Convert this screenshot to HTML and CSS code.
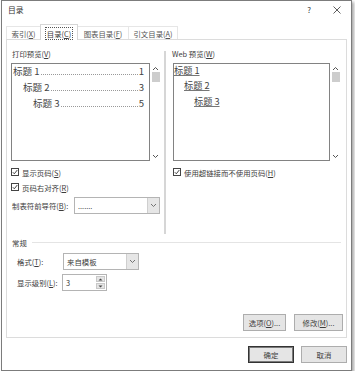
FILE: index.html
```html
<!DOCTYPE html>
<html lang="zh-CN">
<head>
    <meta charset="UTF-8">
    <meta name="viewport" content="width=device-width, initial-scale=1.0">
    <title>目录</title>
    <link rel="stylesheet" href="styles.css">
</head>
<body>
    <div class="dialog">
        <div class="titlebar">
            <span class="title">目录</span>
            <span class="help">?</span>
            <span class="close">
                <svg width="8" height="8" viewBox="0 0 8 8"><path d="M0.5 0.5 L7.5 7.5 M7.5 0.5 L0.5 7.5" stroke="#333" stroke-width="0.8" fill="none"/></svg>
            </span>
        </div>

        <div class="tabs">
            <span class="tab tab-index"><span>索引(<u>X</u>)</span></span>
            <span class="tab tab-toc active"><span class="focus">目录(<u>C</u>)</span></span>
            <span class="tab tab-figures"><span>图表目录(<u>F</u>)</span></span>
            <span class="tab tab-cites"><span>引文目录(<u>A</u>)</span></span>
        </div>

        <div class="panel">
            <div class="previews">
                <div class="col col-print">
                    <div class="label">打印预览(<u>V</u>)</div>
                    <div class="preview-wrap">
                        <div class="preview">
                            <div class="entries">
                                <div class="entry"><span>标题 1</span><span class="dots"></span><span>1</span></div>
                                <div class="entry level2"><span>标题 2</span><span class="dots"></span><span>3</span></div>
                                <div class="entry level3"><span>标题 3</span><span class="dots"></span><span>5</span></div>
                            </div>
                        </div>
                        <div class="scrollbar">
                            <svg class="arrow-up" width="7" height="5" viewBox="0 0 7 5"><polyline points="1,4 3.5,1.5 6,4" stroke="#555" stroke-width="1" fill="none"/></svg>
                            <span class="thumb"></span>
                            <svg class="arrow-down" width="7" height="5" viewBox="0 0 7 5"><polyline points="1,1 3.5,3.5 6,1" stroke="#555" stroke-width="1" fill="none"/></svg>
                        </div>
                    </div>
                    <div class="check first">
                        <span class="box"><svg width="6" height="6" viewBox="0 0 6 6"><polyline points="0.8,3.2 2.3,4.8 5.3,1" stroke="#333" stroke-width="0.9" fill="none"/></svg></span>
                        <span>显示页码(<u>S</u>)</span>
                    </div>
                    <div class="check">
                        <span class="box"><svg width="6" height="6" viewBox="0 0 6 6"><polyline points="0.8,3.2 2.3,4.8 5.3,1" stroke="#333" stroke-width="0.9" fill="none"/></svg></span>
                        <span>页码右对齐(<u>R</u>)</span>
                    </div>
                    <div class="leader-row">
                        <span class="leader-label">制表符前导符(<u>B</u>):</span>
                        <div class="select leader-select">
                            <span class="value">.......</span>
                            <span class="select-arrow"><svg width="7" height="5" viewBox="0 0 7 5"><polyline points="1,1 3.5,3.5 6,1" stroke="#666" stroke-width="0.9" fill="none"/></svg></span>
                        </div>
                    </div>
                </div>

                <div class="divider"></div>

                <div class="col col-web">
                    <div class="label">Web 预览(<u>W</u>)</div>
                    <div class="preview-wrap">
                        <div class="preview web">
                            <div class="web-entries">
                                <div class="link">标题 1</div>
                                <div class="link level2">标题 2</div>
                                <div class="link level3">标题 3</div>
                            </div>
                        </div>
                        <div class="scrollbar">
                            <svg class="arrow-up" width="7" height="5" viewBox="0 0 7 5"><polyline points="1,4 3.5,1.5 6,4" stroke="#555" stroke-width="1" fill="none"/></svg>
                            <span class="thumb"></span>
                            <svg class="arrow-down" width="7" height="5" viewBox="0 0 7 5"><polyline points="1,1 3.5,3.5 6,1" stroke="#555" stroke-width="1" fill="none"/></svg>
                        </div>
                    </div>
                    <div class="check first web-check">
                        <span class="box"><svg width="6" height="6" viewBox="0 0 6 6"><polyline points="0.8,3.2 2.3,4.8 5.3,1" stroke="#333" stroke-width="0.9" fill="none"/></svg></span>
                        <span>使用超链接而不使用页码(<u>H</u>)</span>
                    </div>
                </div>
            </div>

            <div class="section">
                <span>常规</span>
                <span class="section-line"></span>
            </div>

            <div class="field field-format">
                <span class="field-label">格式(<u>T</u>):</span>
                <div class="select format-select">
                    <span class="value">来自模板</span>
                    <span class="select-arrow"><svg width="7" height="5" viewBox="0 0 7 5"><polyline points="1,1 3.5,3.5 6,1" stroke="#666" stroke-width="0.9" fill="none"/></svg></span>
                </div>
            </div>
            <div class="field field-levels">
                <span class="field-label">显示级别(<u>L</u>):</span>
                <div class="spin">
                    <span class="value">3</span>
                    <span class="spin-buttons">
                        <span class="spin-btn"><svg width="5" height="3" viewBox="0 0 5 3"><polygon points="0.5,2.6 2.5,0.4 4.5,2.6" fill="#444"/></svg></span>
                        <span class="spin-btn"><svg width="5" height="3" viewBox="0 0 5 3"><polygon points="0.5,0.4 2.5,2.6 4.5,0.4" fill="#444"/></svg></span>
                    </span>
                </div>
            </div>

            <div class="panel-buttons">
                <button class="btn btn-options">选项(<u>O</u>)...</button>
                <button class="btn btn-modify">修改(<u>M</u>)...</button>
            </div>
        </div>

        <div class="footer">
            <button class="btn btn-ok">确定</button>
            <button class="btn btn-cancel">取消</button>
        </div>
    </div>
</body>
</html>
```

FILE: styles.css
```css
* {
    box-sizing: border-box;
}

body {
    margin: 0;
    background: #fff;
    font-family: "Noto Sans CJK SC", "Liberation Sans", sans-serif;
    font-size: 7.4px;
    color: #3c3c3c;
}

u {
    text-decoration: underline;
    text-underline-offset: 1px;
}

.dialog {
    width: 351px;
    height: 371px;
    margin-left: 1px;
    border: 1px solid #7c7c7c;
    box-shadow: 2px 2px 3px rgba(0,0,0,0.35);
    background: #fff;
    display: flex;
    flex-direction: column;
}

/* title bar */
.titlebar {
    height: 23px;
    display: flex;
    align-items: flex-start;
    padding: 3px 0 0 6px;
    line-height: 12px;
    font-size: 7.8px;
    color: #333;
}

.titlebar .title {
    flex: 1;
}

.help {
    width: 8px;
    margin-right: 19px;
    text-align: center;
}

.close {
    width: 10px;
    height: 12px;
    margin-right: 9px;
    display: flex;
    align-items: center;
    justify-content: center;
}

/* tabs */
.tabs {
    height: 15px;
    display: flex;
    align-items: flex-end;
    padding-left: 4px;
}

.tab {
    height: 13px;
    border: 1px solid #e6e6e6;
    border-bottom: none;
    display: flex;
    align-items: center;
    justify-content: center;
    line-height: 11px;
    color: #555;
    margin-left: -1px;
}

.tab:first-child {
    margin-left: 0;
}

.tab-index { width: 35px; }
.tab-toc { width: 38px; }
.tab-figures { width: 52px; }
.tab-cites { width: 50px; }

.tab.active {
    height: 16px;
    margin-bottom: -1px;
    padding-top: 1px;
    border-color: #d6d6d6;
    background: #fff;
    color: #3c3c3c;
    position: relative;
    z-index: 1;
}

.focus {
    outline: 1px dotted #555;
    outline-offset: 0;
    padding: 0 1px;
}

/* tab panel */
.panel {
    margin: 0 4px;
    height: 299px;
    border: 1px solid #dcdcdc;
    display: flex;
    flex-direction: column;
    padding: 0 3px 6px 4px;
}

.previews {
    height: 194px;
    display: flex;
    padding-top: 8px;
}

.col-print {
    width: 150px;
}

.divider {
    width: 2px;
    margin: 3px 0 0 3px;
    background: #d6d6d6;
}

.col-web {
    width: 169px;
    margin-left: 6px;
}

.label {
    height: 12px;
    line-height: 12px;
    margin-bottom: 3px;
    padding-left: 1px;
}

.col-web .label {
    padding-left: 0;
}

.preview-wrap {
    height: 98px;
    display: flex;
}

.col-web .preview-wrap {
    margin-left: 1px;
}

.preview {
    flex: 1;
    border: 1px solid #828282;
    padding: 0 5px 0 1px;
    overflow: hidden;
}

.preview.web {
    padding: 0;
}

.scrollbar {
    width: 11px;
    display: flex;
    flex-direction: column;
    align-items: center;
    padding-top: 3px;
}

.scrollbar .thumb {
    width: 8px;
    height: 10px;
    margin-top: 1px;
    background: #cdcdcd;
}

.scrollbar .arrow-down {
    margin-top: auto;
    margin-bottom: 2px;
}

.entries {
    margin-top: -1px;
    font-size: 9.6px;
    line-height: 16px;
    color: #444;
}

.entry {
    display: flex;
    white-space: nowrap;
}

.entry.level2 { padding-left: 10px; }
.entry.level3 { padding-left: 20px; }

.dots {
    flex: 1;
    align-self: flex-end;
    margin: 0 1px 4px 1px;
    border-bottom: 1px dotted #999;
}

.web-entries {
    margin-top: -1.5px;
    font-size: 9.2px;
    line-height: 15.5px;
    color: #444;
}

.link {
    width: fit-content;
    text-decoration: underline;
    text-underline-offset: 1px;
    text-decoration-color: #777;
}

.link.level2 { margin-left: 10px; }
.link.level3 { margin-left: 20px; }

/* checkboxes */
.check {
    height: 12px;
    display: flex;
    align-items: center;
    gap: 3px;
    margin-top: 3px;
}

.check.first {
    margin-top: 5px;
}

.web-check {
    margin-left: 1px;
}

.box {
    width: 8px;
    height: 8px;
    border: 1px solid #444;
    display: flex;
    align-items: center;
    justify-content: center;
}

/* dropdowns */
.leader-row {
    height: 17px;
    margin-top: 4px;
    display: flex;
    align-items: center;
}

.leader-label {
    width: 63px;
    padding-left: 1px;
}

.select {
    height: 17px;
    border: 1px solid #b4b4b4;
    display: flex;
    align-items: stretch;
}

.select .value {
    flex: 1;
    display: flex;
    align-items: center;
    padding-left: 3px;
}

.select-arrow {
    width: 12px;
    background: #e6e6e6;
    border-left: 1px solid #cfcfcf;
    display: flex;
    align-items: center;
    justify-content: center;
}

.leader-select {
    width: 86px;
}

.format-select {
    width: 76px;
}

/* general section */
.section {
    height: 12px;
    margin-top: 2px;
    display: flex;
    align-items: center;
    padding-left: 1px;
}

.section-line {
    flex: 1;
    margin: 0 2px 0 5px;
    border-top: 1px solid #e4e4e4;
}

.field {
    height: 17px;
    display: flex;
    align-items: center;
    padding-left: 6px;
}

.field-format {
    margin-top: 5px;
}

.field-levels {
    margin-top: 4px;
}

.field-label {
    width: 46px;
}

.field-levels .field-label {
    width: 45px;
}

.spin {
    width: 45px;
    height: 17px;
    border: 1px solid #b4b4b4;
    display: flex;
}

.spin .value {
    flex: 1;
    display: flex;
    align-items: center;
    padding-left: 3px;
}

.spin-buttons {
    width: 10px;
    display: flex;
    flex-direction: column;
    gap: 1px;
    padding: 1px 1px 1px 0;
}

.spin-btn {
    flex: 1;
    background: #e4e4e4;
    border: 1px solid #c8c8c8;
    display: flex;
    align-items: center;
    justify-content: center;
}

/* buttons */
.btn {
    height: 17px;
    padding: 0;
    border: 1px solid #adadad;
    background: #e5e5e5;
    font-family: inherit;
    font-size: 7.4px;
    color: #3c3c3c;
}

.panel-buttons {
    margin-top: auto;
    display: flex;
    justify-content: flex-end;
    gap: 8px;
}

.btn-options { width: 43px; }
.btn-modify { width: 49px; }

.footer {
    display: flex;
    justify-content: flex-end;
    gap: 7px;
    padding: 8px 4px 0 0;
}

.btn-ok,
.btn-cancel {
    width: 46px;
}

.btn-ok {
    border: 1px solid #333;
    box-shadow: inset 0 0 0 1px #7a7a7a;
}
```
